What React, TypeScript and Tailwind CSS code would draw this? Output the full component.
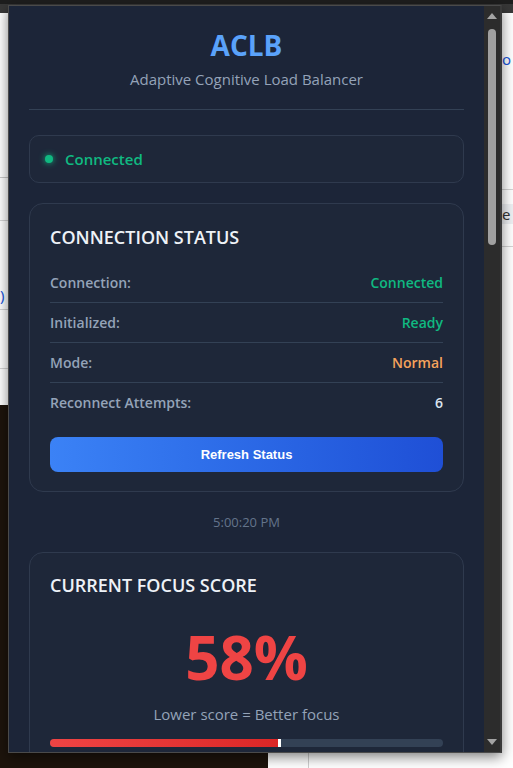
import React from 'react';

const rows = [
  { label: 'Connection:', value: 'Connected', color: 'text-[#10b981]' },
  { label: 'Initialized:', value: 'Ready', color: 'text-[#10b981]' },
  { label: 'Mode:', value: 'Normal', color: 'text-[#f6a35c]' },
  { label: 'Reconnect Attempts:', value: '6', color: 'text-[#dbe4f0]' },
];

const PageBehind: React.FC = () => (
  <div className="flex h-full flex-col">
    <div className="h-[13px] border-t-4 border-[#1e1e1e] bg-[#383838]" />
    <div className="flex flex-1">
      <div className="flex w-[268px] flex-col">
        <div className="h-[392px] bg-white">
          <div className="mt-[164px] border-t border-[#c8c8c8]" />
          <div className="mt-[42px] border-t border-[#d4d4d4]" />
          <div className="mt-[64px] text-[15px] leading-[20px] text-[#1a56db]">)</div>
          <div className="mt-[4px] border-t border-[#d4d4d4]" />
          <div className="mt-[58px] border-t border-[#d4d4d4]" />
        </div>
        <div className="flex-1 bg-[#1d140c]" />
      </div>
      <div className="flex flex-1 bg-white">
        <div className="ml-[40px] mt-[640px] border-l border-[#cfcfcf]" />
        <div className="ml-auto flex w-[11px] flex-col">
          <div className="mt-[36px] text-[15px] leading-[20px] text-[#1a56db]">o</div>
          <div className="mt-[120px] border-t border-[#d4d4d4]" />
          <div className="mt-[14px] h-[20px] bg-[#eef0f3] text-[15px] leading-[20px] text-[#333]">e</div>
          <div className="mt-[22px] border-t border-[#d4d4d4]" />
        </div>
      </div>
    </div>
  </div>
);

const Scrollbar: React.FC = () => (
  <div className="flex w-[16px] flex-col items-center bg-[#2c2c2c]">
    <div className="mt-[7px] h-0 w-0 border-x-[5px] border-b-[6px] border-x-transparent border-b-[#a3a3a3]" />
    <div className="mt-[10px] h-[216px] w-[8px] rounded-full bg-[#a0a0a0]" />
    <div className="mt-auto mb-[7px] h-0 w-0 border-x-[5px] border-t-[6px] border-x-transparent border-t-[#a3a3a3]" />
  </div>
);

const Popup: React.FC = () => (
  <div className="flex h-full">
    <div className="flex-1 overflow-hidden px-[20px] pt-[22px] font-['Open_Sans','Noto_Sans',sans-serif]">
      <div className="border-b border-[#334155] pb-[19px] text-center">
        <h1 className="text-[28px] font-bold leading-[34px] text-[#5aa2fa]">ACLB</h1>
        <p className="mt-[6px] text-[15px] leading-[22px] text-[#94a3b8]">Adaptive Cognitive Load Balancer</p>
      </div>

      <div className="mt-[25px] flex h-[48px] items-center gap-[12px] rounded-[10px] border border-[#2f3a4e] bg-[#1e2739] px-[15px]">
        <span className="h-[8px] w-[8px] rounded-full bg-[#10b981] shadow-[0_0_6px_#10b981]" />
        <span className="text-[15px] font-semibold leading-[22px] text-[#10b981]">Connected</span>
      </div>

      <section className="mt-[20px] rounded-[14px] border border-[#2f3a4e] bg-[#1e2739] px-[20px] pt-[19px] pb-[19px]">
        <h2 className="text-[18px] font-semibold uppercase leading-[28px] text-[#eef2f7]">Connection Status</h2>
        <div className="mt-[12px]">
          {rows.map((r, i) => (
            <div
              key={r.label}
              className={`flex items-center justify-between py-[10px] text-[14px] leading-[19px] ${
                i < rows.length - 1 ? 'border-b border-[#334155]' : ''
              }`}
            >
              <span className="font-semibold text-[#94a3b8]">{r.label}</span>
              <span className={`font-semibold ${r.color}`}>{r.value}</span>
            </div>
          ))}
        </div>
        <button className="mt-[15px] h-[35px] w-full rounded-[8px] bg-gradient-to-r from-[#3b82f6] to-[#1f4fd6] font-['Liberation_Sans',Arial,sans-serif] text-[13px] font-bold text-white">
          Refresh Status
        </button>
      </section>

      <p className="my-[21px] text-center text-[13px] leading-[18px] text-[#64748b]">5:00:20 PM</p>

      <section className="rounded-[14px] border border-[#2f3a4e] bg-[#1e2739] px-[20px] pt-[18px] pb-[20px]">
        <h2 className="text-[18px] font-semibold uppercase leading-[28px] text-[#eef2f7]">Current Focus Score</h2>
        <div className="mt-[18px] text-center text-[60px] font-bold leading-[80px] text-[#ef4444]">58%</div>
        <p className="mt-[7px] text-center text-[15px] leading-[20px] text-[#94a3b8]">Lower score = Better focus</p>
        <div className="mt-[15px] flex h-[8px] overflow-hidden rounded-full bg-[#334155]">
          <div className="h-full bg-gradient-to-r from-[#ef4444] to-[#dc2626]" style={{ width: '58%' }} />
          <div className="h-full w-[3px] bg-white" />
        </div>
      </section>
    </div>
    <Scrollbar />
  </div>
);

export default function App() {
  return (
    <div className="relative h-[768px] w-[513px] overflow-hidden bg-white">
      <PageBehind />
      <div className="absolute left-[8px] top-[5px] h-[748px] w-[494px] border border-[#4a4a4a] border-r-[2px] border-r-[#3a3a3a] bg-[#1c2538] shadow-[0_4px_12px_rgba(0,0,0,0.5)]">
        <Popup />
      </div>
    </div>
  );
}
